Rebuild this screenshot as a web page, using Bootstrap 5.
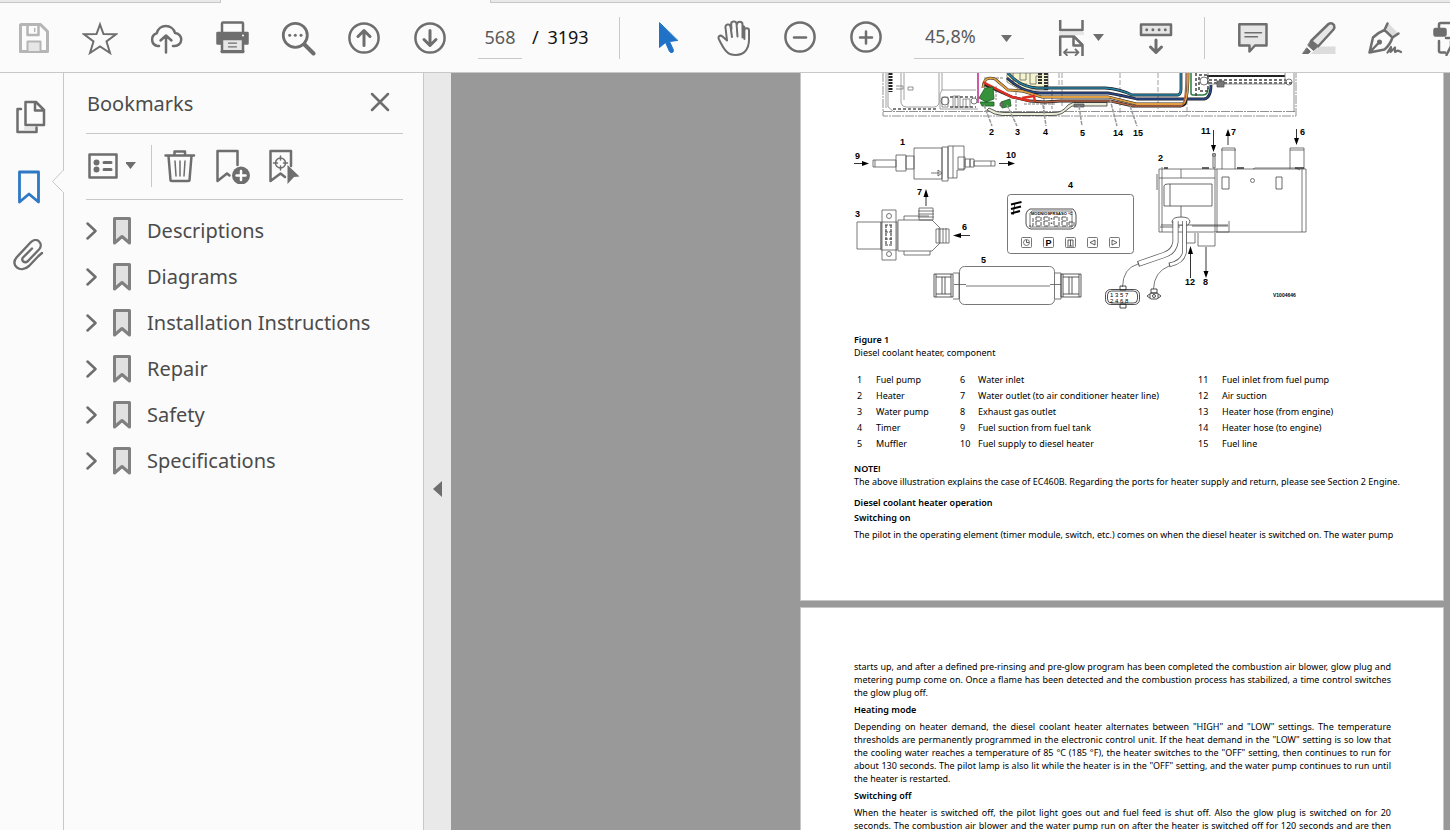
<!DOCTYPE html>
<html lang="en">
<head>
<meta charset="utf-8">
<meta name="viewport" content="width=device-width, initial-scale=1">
<title>Document viewer</title>
<link rel="stylesheet" href="https://cdn.jsdelivr.net/npm/bootstrap@5.3.0/dist/css/bootstrap.min.css">
<script src="https://cdn.jsdelivr.net/npm/bootstrap@5.3.0/dist/js/bootstrap.bundle.min.js"></script>
<style>
:root{--line:#c8c8c8;--ink:#6e6e6e;--paper:#fbfbfb}
body{font-family:"Noto Sans","Open Sans",sans-serif;background:var(--paper);color:#4b4b4b;line-height:1.2}
svg{display:block;flex:none}
.ico{width:36px;height:36px;fill:none;stroke:var(--ink);stroke-width:2.5;stroke-linejoin:round;stroke-linecap:round}
.ico-muted{stroke:#b5b5b5}
.ico-active{stroke:#2f78c4}
.ico-flat{stroke-linecap:butt}
.tabstrip{height:3px}
.tab-rest{background:#e9e9e9;border-bottom:1px solid var(--line)}
.tab-first{width:221px;border-right:1px solid var(--line)}
.tab-open{width:269px}
.tab-last{border-left:1px solid var(--line)}
.toolbar{height:70px;border-bottom:1px solid var(--line);padding-left:1px}
.toolbar>*{flex:none}
.tool{width:66px;height:66px;padding:0;border:0;background:none;display:flex;align-items:center;justify-content:center}
.tool-fit{width:55px;gap:4px;justify-content:flex-start;margin-left:29px}
.step{margin-left:15px}
.vline{width:1px;height:42px;background:var(--line);flex:none}
.field{border:0;border-bottom:1px solid var(--line);background:none;height:42px;color:#5a5a5a;font-size:18px;padding:0}
.pagebox{width:44px;text-align:center}
.total{font-size:18px;color:#111;padding-left:10px;width:97px;white-space:nowrap}
.zoombox{width:110px;position:relative}
.zoombox select{width:100%;appearance:none;padding-left:11px}
.zoombox svg{position:absolute;right:12px;top:18px;pointer-events:none}
.caret{width:11px;height:7px;fill:var(--ink)}
.rail{width:64px;border-right:1px solid var(--line);padding-top:26px;gap:34px}
.rail button{border:0;background:none;padding:0;height:36px;width:58px;display:flex;justify-content:center;position:relative}
.rail .notch{position:absolute;left:52px;top:0;height:24px;width:12px}
.panel{width:360px;border-right:1px solid var(--line);padding:0 20px 0 22px}
.panel h1{font-size:20px;font-weight:400;padding:2px 0 0 1px}
.panel-head{height:61px;border-bottom:1px solid var(--line)}
.panel-tools{height:66px;border-bottom:1px solid var(--line);padding-bottom:2px}
.panel-tools button,.panel-head button{border:0;background:none;padding:0}
.panel-tools .vline{margin:0 10px 0 14px}
.close-x{width:22px;height:22px}
.marks{padding-top:8px}
.marks a{height:46px;font-size:20px;color:#4b4b4b}
.marks .chev{width:12px;height:18px}
.marks .flag{width:20px;height:30px;margin:0 15px 0 14px}
.splitter{width:27px;background:#e9e9e9;border:0;padding:74px 0 0 8px}
.desk{background:#999;padding-right:6px;min-width:0}
.sheet{width:644px;background:#fff;border:1px solid #c6c6c6;padding:0 52px 0 53px;margin-left:auto;color:#000;font-size:9px;line-height:13px;flex:none}
.sheet-a{border-top:0;height:528px;margin-bottom:6px}
.sheet-b{padding-top:52px}
.sheet h2{font-size:9px;line-height:13px;font-weight:600;margin:0}
.sheet p{margin:0;text-align:justify}
.sheet h2.sub{margin-top:2px}
.runs-on{text-align-last:justify}
.legend{margin:13px 0 10px;width:100%;table-layout:fixed}
.legend td{padding:0;height:16px;line-height:16px;white-space:nowrap}
.legend td:first-child{padding-left:3px}
.legend .num{width:22px}.legend .part{width:84px}.legend .num2{width:18px}.legend .part2{width:220px}.legend .num3{width:24px}
.plate{width:100%;height:260px}
.plate text{font-family:"Liberation Sans",sans-serif;font-weight:700;font-size:9px;fill:#000;stroke:none}
.plate .tiny{font-size:5px}
.plate .lcd{font-size:4px}
.plate .pins{font-size:6px;font-weight:400}
</style>
</head>
<body class="vh-100 d-flex flex-column overflow-hidden">
<div class="tabstrip d-flex flex-shrink-0">
  <div class="tab-rest tab-first"></div><div class="tab-open"></div><div class="tab-rest tab-last flex-grow-1"></div>
</div>
<header class="toolbar d-flex align-items-center flex-nowrap flex-shrink-0 overflow-hidden">
  <button class="tool" aria-label="Save"><svg class="ico ico-muted" viewBox="0 0 36 36"><path d="M5 4.500H24.500L31.500 11.500V31.500H4.500V5Z" stroke-width="3"/><path d="M11.500 4.500V15H22.500V4.500"/><path d="M18.700 8.500V11.500" stroke-width="1.500"/><path d="M11.500 31V21.500H24.500V31" fill="#e6e6e6" stroke-width="2"/></svg></button>
  <button class="tool" aria-label="Star"><svg class="ico" viewBox="0 0 36 36"><path stroke-width="2" stroke-linejoin="miter" d="M18 4.500L21.500 14 34 14.300 24.500 21.500 28 33 18 26.500 8 33 11.500 21.500 2 14.300 14.500 14Z"/></svg></button>
  <button class="tool" aria-label="Upload"><svg class="ico" viewBox="0 0 36 36"><path d="M11 26H9.500A6.600 6.600 0 0 1 8.800 13.200 9.400 9.400 0 0 1 27 13 6.500 6.500 0 0 1 26.500 26H25M18 16V32.500M12.500 20.500L18 15.500 23.500 20.500"/></svg></button>
  <button class="tool" aria-label="Print"><svg class="ico" viewBox="0 0 36 36"><path d="M8 12V3.500Q8 2.500 9 2.500H28Q29 2.500 29 3.500V12" fill="#fbfbfb"/><path d="M3.500 13H33.500V23.500H3.500Z" fill="#6e6e6e"/><path d="M8 19H29V32H8Z" fill="#e6e6e6"/><path d="M14.500 23.200H22.500M14.500 26.800H22.500" stroke-width="1.300"/><path d="M8 31.500H29" stroke-width="3"/><circle cx="29" cy="15.500" r="1" fill="#fff" stroke="none"/></svg></button>
  <button class="tool" aria-label="Find"><svg class="ico" viewBox="0 0 36 36"><circle cx="15.300" cy="15.300" r="12" stroke-width="2.800"/><path d="M24.500 24.500L33.500 33.500" stroke-width="4"/><g fill="#6e6e6e" stroke="none"><circle cx="9.700" cy="15.300" r="1.500"/><circle cx="15.300" cy="15.300" r="1.500"/><circle cx="21" cy="15.300" r="1.500"/></g></svg></button>
  <button class="tool" aria-label="Previous page"><svg class="ico" viewBox="0 0 36 36"><circle cx="18" cy="18" r="14.600"/><path stroke-width="3" d="M18 25.500V11M12 16.500L18 10.500 24 16.500"/></svg></button>
  <button class="tool" aria-label="Next page"><svg class="ico" viewBox="0 0 36 36"><circle cx="18" cy="18" r="14.600"/><path stroke-width="3" d="M18 10.500V25M12 19.500L18 25.500 24 19.500"/></svg></button>
  <input class="field pagebox step" value="568" aria-label="Page number">
  <div class="total"><span class="me-1">/</span> 3193</div>
  <div class="vline"></div>
  <button class="tool step" aria-label="Select"><svg class="ico" viewBox="0 0 36 36"><path fill="#2072c7" stroke="#2072c7" stroke-width="1" d="M9.500 3V27.500L15.500 22.500 19.500 31.500Q21 33.500 23 32 24 31 23 29L19.500 21.500 27.500 20.500Z"/></svg></button>
  <button class="tool" aria-label="Pan"><svg class="ico" viewBox="0 0 36 36"><path stroke-width="2" d="M11 20.500L6.500 16.500C4 14.500 1.500 16.500 3 19.500 6 25 7.500 29 11 32 15 36 25 36 29 31.500 32 28 33 25 33 20V10.500A2.300 2.300 0 0 0 28.400 10.500M11 20.500L9.500 7.500A2.500 2.500 0 0 1 14.500 6.500L16 17M15.500 9L15.200 4.500A2.700 2.700 0 0 1 20.500 3.500L21.500 16.500M21 4.500A2.500 2.500 0 0 1 26.500 4.500V17.500M26.500 6A1.800 1.800 0 0 1 28.400 8V19"/></svg></button>
  <button class="tool" aria-label="Zoom out"><svg class="ico" viewBox="0 0 36 36"><circle cx="18" cy="17" r="14.600"/><path d="M12 17.500H24"/></svg></button>
  <button class="tool" aria-label="Zoom in"><svg class="ico" viewBox="0 0 36 36"><circle cx="18" cy="17" r="14.600"/><path d="M12 17.500H24M18 11.500V23.500"/></svg></button>
  <div class="zoombox step"><select class="field" aria-label="Zoom"><option>45,8%</option></select><svg class="caret" viewBox="0 0 11 7"><path d="M0 0H11L5.500 7Z"/></svg></div>
  <button class="tool tool-fit" aria-label="Fit width"><svg class="ico ico-flat" viewBox="0 0 36 36"><path d="M6 12H31V15H6Z" fill="#e6e6e6" stroke="none"/><path d="M7.200 0V10H29.500V0M7.200 36V16.500H21L29.500 25V36M20.500 17V25.500H29"/><path stroke-width="1.800" d="M11 32.300H25.500M14.500 28.800L11 32.300 14.500 35.800M22 28.800L25.500 32.300 22 35.800"/></svg><svg class="caret" viewBox="0 0 11 7"><path d="M0 0H11L5.500 7Z"/></svg></button>
  <button class="tool step" aria-label="Scrolling mode"><svg class="ico" viewBox="0 0 36 36"><path fill="#e6e6e6" d="M3 4.500H33V15H3Z"/><path stroke-width="3" stroke-dasharray="0 6.200" d="M8.700 9.700H28"/><path stroke-width="3" d="M18 20V32M12.500 27L18 32.500 23.500 27"/></svg></button>
  <div class="vline step"></div>
  <button class="tool step" aria-label="Comment"><svg class="ico" viewBox="0 0 36 36"><path fill="#e6e6e6" d="M4.300 4.300H31.500V25.500H20L14.500 31.500V25.500H4.300Z"/><path stroke-width="1.500" d="M10 12.700H26.500M10 16.700H22.500"/></svg></button>
  <button class="tool" aria-label="Highlight"><svg class="ico" viewBox="0 0 36 36"><path fill="#dcdcdc" stroke="none" d="M9 34H34.500V26.500H19Z"/><path fill="#e6e6e6" d="M10 21L27.500 4Q30.500 2 33 5 34 7.500 32.500 9.500L17 26.500Z"/><path fill="#6e6e6e" stroke-width="1" d="M9.500 21.500L16 27.500 12.500 30.500 7 25.500ZM6 28L9.500 31.500 7.500 33.500H2Z"/></svg></button>
  <button class="tool" aria-label="Sign"><svg class="ico" viewBox="0 0 36 36"><path fill="#dcdcdc" stroke="none" d="M21 3L31 13 26 16 18 8Z"/><path d="M2.500 32.500L6 17.500Q11 12.500 17.500 10L25.500 17.500Q23 25 17.500 29.500ZM2.500 32.500L12 22.500M17.500 10L20.500 3.500M25.500 17.500L31.500 13.500"/><circle cx="12.500" cy="22" r="1.300"/><path stroke-width="2.200" d="M20.500 32.500L24 27 23.500 32 28 27.500 28 32 31 30.500 34 32"/></svg></button>
  <button class="tool justify-content-start step" aria-label="More tools"><svg class="ico" viewBox="0 0 36 36"><rect x="1.500" y="9" width="11" height="6.500" rx="1" fill="#6e6e6e"/><path d="M6 9V4.500Q6 3 8 3H24V18H13M6 21V31Q6 32.500 8 32.500H12M18 21V26L13.500 35"/></svg></button>
</header>
<main class="d-flex flex-grow-1 overflow-hidden">
  <nav class="rail d-flex flex-column flex-shrink-0" aria-label="Panels">
    <button aria-label="Page thumbnails"><svg class="ico" viewBox="0 0 36 36"><path d="M10 10H6.500V33H25.500V28.500"/><path fill="#e6e6e6" stroke="none" d="M13 28H24V31H13Z"/><path d="M14.500 3H25L33 11V26H14.500ZM24 3.500V11.500H32"/></svg></button>
    <button aria-label="Bookmarks"><svg class="ico ico-active" viewBox="0 0 36 36"><path stroke-width="2.800" d="M8.500 3H27.500V33L18 25 8.500 33Z"/></svg><svg class="notch" viewBox="0 0 12 24"><path d="M11.500 1L.5 12.500 11.500 23.500" fill="#fbfbfb" stroke="#c8c8c8"/><path d="M11.500 2V23" stroke="#fbfbfb" stroke-width="1.500"/></svg></button>
    <button aria-label="Attachments"><svg class="ico" viewBox="1 3 36 36"><path stroke-width="2.400" d="M28.500 20L19 30C10 38 0 29 6.500 21.500L20.500 6.500C27 0 34 8 29 13.500L18 25C14.500 28 10.500 24.500 13 21.500L22 12.500M32 17L28.500 20"/></svg></button>
  </nav>
  <aside class="panel flex-shrink-0">
    <div class="panel-head d-flex align-items-center justify-content-between">
      <h1 class="m-0">Bookmarks</h1>
      <button aria-label="Close" class="me-2 pe-1"><svg class="ico close-x" viewBox="0 0 22 22"><path d="M3 2L19 18M19 2L3 18"/></svg></button>
    </div>
    <div class="panel-tools d-flex align-items-center">
      <button class="d-flex align-items-center gap-1" aria-label="Options"><svg class="ico" viewBox="0 0 36 36"><path d="M3.500 6.500H30.500V29.500H3.500Z"/><g stroke-width="3"><path d="M18 14.500H25M18 21.500H25"/><circle cx="10.500" cy="14.500" r="1.500"/><circle cx="10.500" cy="21.500" r="1.500"/></g></svg><svg class="caret" viewBox="1 0 11 7"><path d="M0 0H11L5.500 7Z"/></svg></button>
      <div class="vline"></div>
      <button aria-label="Delete"><svg class="ico" viewBox="0 0 36 36"><path d="M3.500 7.500H32M12.500 7V3.500H23V7M6.500 8L8.500 32Q8.500 33 10 33H26Q27.500 33 27.500 32L29.500 8"/><path stroke-width="1.500" d="M13 13L14 28M18 13V28M23 13L22 28"/></svg></button>
      <button class="ms-3" aria-label="New bookmark"><svg class="ico" viewBox="0 0 36 36"><path d="M13 25.500L3.500 33V3H23.500V17M13 25.500L15.500 27.500"/><circle cx="27" cy="27.500" r="9" fill="#6e6e6e" stroke="none"/><path stroke="#fff" d="M22.500 27.500H31.500M27 23V32"/></svg></button>
      <button class="ms-3" aria-label="Find current bookmark"><svg class="ico" viewBox="0 0 36 36"><path d="M25 18V3H4.500V33L14.500 25.500 19 29"/><circle cx="14.500" cy="15" r="5" stroke-width="1.500"/><path stroke-width="1.500" d="M14.500 8V12M14.500 18V22M7.500 15H11.500M17.500 15H21.500"/><path fill="#6e6e6e" stroke="none" d="M21.500 17L33.500 28.500 28 29 21.500 36Z"/></svg></button>
    </div>
    <div class="marks" id="marks"></div>
  </aside>
  <button class="splitter flex-shrink-0" aria-label="Collapse panel"><svg width="11" height="16" viewBox="0 0 11 16"><path fill="#6e6e6e" d="M10 0V16L1 8Z"/></svg></button>
  <section class="desk flex-grow-1 d-flex flex-column overflow-hidden">
    <article class="sheet sheet-a">
      <svg class="plate" viewBox="854 73 537 260" fill="none" stroke="#555" stroke-width=".8" role="img" aria-label="Diesel coolant heater components">
        <!-- machine outline, cut by the top edge -->
        <g>
          <path stroke="#777" stroke-dasharray="9 1 2 1" d="M883 73V116H1296V73M883 111.500H1296"/>
          <path stroke="#888" d="M886 73V108M888 73V107L893 111M901 73V103Q902 107 906 107H930Q938 108 939 103V73M904 73V100M942 73V90L940 94V109H978M942 90H976"/>
          <path stroke="#222" stroke-width="4" stroke-dasharray="2 1" d="M890.500 73V92"/>
          <path stroke="#777" d="M896 86H903V89H896M908 87H913V90H908ZM942 97H948V107H942ZM953 96H960V107H953ZM963 99H970V107H963ZM955 97V106M958 97V106M966 99V106"/>
          <circle cx="945" cy="101" r="4"/><circle cx="974" cy="101" r="3"/>
          <path stroke-width="1.500" stroke-dasharray="3 2" d="M950 97H976M950 107H976M893 109H938"/>
          <path fill="#f6f4ce" stroke="#777" d="M1007 73H1048V90H1020L1007 82Z"/>
          <path stroke="#666" d="M1013 73V85M1020 73V80H1026V73M1030 73V84H1036V76H1042M1010 81H1016M1018 84H1027M1036 88H1046"/>
          <path stroke="#333" stroke-width="4" stroke-dasharray="2 1" d="M1046 73V90M1040 73V84"/>
          <path stroke="#888" stroke-dasharray="5 2" d="M1059 73V88M1062 73V108M1120 73V116M1158 73V109M1187 100V116"/>
          <path stroke="#666" stroke-dasharray="3 1" d="M984 78H1004M996 86V100M1024 104H1056M1052 90V110M1044 98V112M1016 92V110"/>
          <path stroke="#d157a9" stroke-width="2" d="M978 73V103"/>
          <path fill="#edeedb" stroke="#333" d="M989 108Q997 113 1004 112.500H1054Q1062 113 1068 105L1073 102.500H1107V106H1072L1062 113.500Q1057 116 1050 115.500H1002Q994 115 987 110Z"/>
          <g stroke="#222" stroke-width="2.800"><path d="M1008 73Q1020 87 1037 88H1105Q1120 89 1132 95H1178Q1181 94 1181 89V73"/><path d="M1007 78Q1022 92 1040 93H1108Q1120 95 1137 99H1204Q1211 98 1211 85"/><path d="M983 88Q984 75 995 79L1008 90 1022 91 1042 97H1108L1137 104H1183Q1188 102 1188 73"/><path d="M983 84L1012 97 1030 101 1045 102 1060 101H1110L1133 106H1181Q1186 105 1186 100"/></g>
          <path stroke="#2685a8" stroke-width="1.600" d="M1008 73Q1020 87 1037 88H1105Q1120 89 1132 95H1178Q1181 94 1181 89V73"/>
          <path stroke="#29478f" stroke-width="1.400" d="M1007 78Q1022 92 1040 93H1108Q1120 95 1137 99H1204Q1211 98 1211 85"/>
          <path stroke="#e2a041" stroke-width="1.800" d="M983 88Q984 75 995 79L1008 90 1022 91 1042 97H1108L1137 104H1183Q1188 102 1188 73"/>
          <path stroke="#b76445" stroke-width="1.400" d="M1030 101L1045 102 1060 101H1110L1133 106H1181Q1186 105 1186 73"/>
          <path stroke="#dd3024" stroke-width="2.400" d="M983 82L1012 97 1030 101M1022 98L1034 96 1035 102"/>
          <path fill="#36913a" stroke="#185c20" d="M985 88L993 87 994 99 986 102 979 98ZM1001 102L1010 99 1011 106 1002 108ZM980 102H994V106H982Z"/>
          <path stroke="#287940" stroke-width="1.500" d="M1191 73V93Q1191 95 1193 95H1203Q1208 95 1208 88"/>
          <path stroke-dasharray="3 2" stroke="#444" stroke-width="1.500" d="M1196 73V96M1199 75H1208V91H1199ZM1209 83H1293M1209 80H1286"/>
          <path stroke="#222" stroke-width="2" d="M1207 76H1285"/><path stroke="#777" d="M1208 73V84H1285V73M1294 73V112"/>
          <circle cx="1204" cy="81" r="4"/><circle cx="1289" cy="82" r="3"/><path fill="#777" d="M1217 81H1224V87H1217ZM1074 104H1084V107H1074ZM1000 103H1003V106H1000Z"/>
          <path stroke="#999" stroke-dasharray="4 1" stroke-width="1.500" d="M984 105L992 126M1007 105L1017 126M1043 105L1046 126M1079 106L1082 126M1110 99L1117 126M1130 106L1137 126"/>
        </g>
        <!-- 1: fuel pump -->
        <path fill="#fff" d="M873 160H896V167H873ZM875 160V167M896 155H906V171H896ZM906 156H914V169H906ZM914 148H942V179H914ZM942 147H948V181H942ZM948 146H964V170H957V178H948ZM953 146V178M958 157H965V169H958ZM965 159H970V167H965ZM970 159H974V167H970ZM974 161H995V166H974ZM991 161V166M931 173H940M938 170V176L942 173Z"/>
        <!-- 3: water pump -->
        <path fill="#fff" d="M857 222H881V249H857ZM882 210H896V260H882ZM898 220H932L940 228V243L932 251H898ZM904 220V216H929M904 251V255H930V251M881 222H897V250H881ZM919 208H933V220H919ZM918 211H934M918 214H934M918 217H934M936 229H949V243H936ZM939 228V243M943 228V243M946 228V243"/>
        <circle cx="889" cy="216" r="2.500"/><circle cx="889" cy="254" r="2.500"/><path stroke="#444" stroke-width="1.200" stroke-dasharray="3 1" d="M886 225V245M891 225V245M885 225H893M885 232H893M885 239H893M885 245H893"/>
        <!-- 4: timer -->
        <rect x="1007.500" y="194.500" width="126" height="59" rx="3"/><path stroke="#000" stroke-width="2" d="M1011 204.500L1021.500 202M1011 209L1021 206.500M1011 213.500L1020 211"/><path stroke="#000" d="M1015 203L1013 215"/>
        <path stroke="#222" d="M1030 209H1073Q1076 212 1076 215V223Q1076 228 1071 229H1031Q1026 228 1026 223V214Q1027 210 1030 209Z"/><path d="M1032 211H1072V227H1030V213Z"/>
        <path stroke-width="1" stroke-dasharray="4 1" d="M1033 218V226H1029M1036 217H1041V226H1036ZM1036 221H1041M1044 217H1049V226H1044ZM1044 221H1049M1054 217H1059V226H1054ZM1062 217H1067V226H1062ZM1062 221H1067M1069 222H1074V226H1069Z"/><path stroke-width="1.500" stroke-dasharray="1.500 3" d="M1051.500 218V225"/>
        <g><rect x="1021.500" y="237.500" width="10" height="10" rx="1"/><rect x="1043.500" y="237.500" width="10" height="10" rx="1"/><rect x="1065.500" y="237.500" width="10" height="10" rx="1"/><rect x="1087.500" y="237.500" width="10" height="10" rx="1"/><rect x="1109.500" y="237.500" width="10" height="10" rx="1"/></g>
        <circle cx="1026.500" cy="242.500" r="3"/><path stroke="#333" d="M1026.500 240V242.500H1029M1068 240H1073V245M1068 240V245M1070.500 240V246M1067 246H1074M1095 240V245L1090 242.500ZM1112 240V245L1117 242.500Z"/>
        <!-- 5: muffler -->
        <rect x="959.500" y="266.500" width="95" height="38" rx="5" fill="#fff"/><path d="M953 273H959V299H953M1055 273H1061V299H1055M954 284.500H966M966 286H1050M1050 284.500H1061"/>
        <g stroke="#333"><path d="M934 274H953V297H934ZM1061 274H1081V297H1061ZM936 277H951M936 294H951M1063 277H1079M1063 294H1079"/><path d="M936 274V297M942 277V294M945 277V294M951 274V297M1063 274V297M1069 277V294M1072 277V294M1079 274V297"/></g>
        <!-- 2: heater -->
        <path fill="#fff" d="M1159 169H1306V232H1159ZM1162 167V232M1215 169V232M1217 169V232M1302 169V232M1222 169V148H1235V169M1221 150H1236M1290 169V148H1304V169M1290 150H1304M1159 178H1215M1181 169V178M1253 169L1255 168H1296L1300 170M1229 221V232H1216"/>
        <path stroke="#444" d="M1164 186Q1164 184 1168 184H1212V206H1164ZM1170 184V206M1181 206V218M1161 225H1228M1160 227H1180M1192 226H1228M1222 177H1229V189H1222ZM1276 177H1282V189H1276ZM1157 174V190M1213 153V168H1215V153"/><circle cx="1252.500" cy="180.500" r="2"/><circle cx="1214" cy="155" r="1.500"/>
        <path stroke="#333" stroke-width="1.500" d="M1164 168H1168M1202 168H1209M1237 168H1244M1295 168H1304"/>
        <path d="M1186 233V243H1195V233M1198 233V246H1215V233"/>
        <path stroke="#444" fill="#fff" d="M1172 222Q1172 217 1181 217 1190 217 1190 222L1188 225H1174Z"/>
        <path stroke="#555" stroke-width="6" d="M1175.500 221V242Q1174 252 1164 255L1138 264"/><path stroke="#fff" stroke-width="4.500" d="M1175.500 220V242Q1174 252 1164 255L1139 263.600"/><path stroke="#555" stroke-width="4.500" d="M1184.500 221V252Q1183 262 1169 265"/><path stroke="#fff" stroke-width="3" d="M1184.500 220V252Q1183 262 1170 264.800"/>
        <path d="M1138 264Q1123 268 1122.500 287M1169 266Q1154 272 1153.500 289"/>
        <g stroke="#222"><rect x="1105.500" y="289.500" width="34" height="15" rx="5"/><rect x="1107.500" y="291" width="30" height="12" rx="4"/><path d="M1120 286H1126V290H1120ZM1120 304H1126V308H1120ZM1151 289H1157V293H1151ZM1147 296L1151 293H1157L1161 296 1157 299H1151Z"/><circle cx="1154" cy="296" r="1.500"/><path d="M1150 294V298M1158 294V298"/></g>
        <!-- flow arrows -->
        <g stroke="#000"><path d="M854 163.500H863M999 163.500H1010M926 206V195M970 235.500H958M1213.500 130V147M1228 145V133M1296.500 129V140M1190.500 278V252M1206 247V272"/><path fill="#000" stroke="none" d="M862 161L869 163.500 862 166ZM1008 161L1015 163.500 1008 166ZM923.500 197L926 189 928.500 197ZM961 233L953 235.500 961 238ZM1211 145L1213.500 152 1216 145ZM1225.500 136L1228 129 1230.500 136ZM1294 138L1296.500 145 1299 138ZM1188 254L1190.500 246 1193 254ZM1203.500 271L1206 278 1208.500 271Z"/></g>
        <g><text x="989" y="135">2</text><text x="1015" y="135">3</text><text x="1043" y="135">4</text><text x="1080" y="136">5</text><text x="1113" y="136">14</text><text x="1133" y="136">15</text><text x="900" y="145">1</text><text x="855" y="159">9</text><text x="1006" y="158">10</text><text x="917" y="195">7</text><text x="855" y="217">3</text><text x="962" y="230">6</text><text x="1068" y="188">4</text><text x="981" y="263">5</text><text x="1158" y="161">2</text><text x="1201" y="134">11</text><text x="1231" y="135">7</text><text x="1300" y="135">6</text><text x="1185" y="285">12</text><text x="1203" y="285">8</text><text x="1045.500" y="246">P</text><text class="tiny" x="1273" y="297">V1004646</text><text class="lcd" x="1031" y="215">MODNIOSFRSASO °C</text><text class="pins" x="1110" y="297">1 3 5 7</text><text class="pins" x="1110" y="303">2 4 6 8</text></g>
      </svg>
      <h2>Figure 1</h2>
      <p>Diesel coolant heater, component</p>
      <table class="legend">
        <colgroup><col class="num"><col class="part"><col class="num2"><col class="part2"><col class="num3"><col></colgroup>
        <tbody>
        <tr><td>1</td><td>Fuel pump</td><td>6</td><td>Water inlet</td><td>11</td><td>Fuel inlet from fuel pump</td></tr>
        <tr><td>2</td><td>Heater</td><td>7</td><td>Water outlet (to air conditioner heater line)</td><td>12</td><td>Air suction</td></tr>
        <tr><td>3</td><td>Water pump</td><td>8</td><td>Exhaust gas outlet</td><td>13</td><td>Heater hose (from engine)</td></tr>
        <tr><td>4</td><td>Timer</td><td>9</td><td>Fuel suction from fuel tank</td><td>14</td><td>Heater hose (to engine)</td></tr>
        <tr><td>5</td><td>Muffler</td><td>10</td><td>Fuel supply to diesel heater</td><td>15</td><td>Fuel line</td></tr>
        </tbody>
      </table>
      <h2>NOTE!</h2>
      <p class="text-nowrap">The above illustration explains the case of EC460B. Regarding the ports for heater supply and return, please see Section 2 Engine.</p>
      <h2 class="mt-2">Diesel coolant heater operation</h2>
      <h2 class="sub">Switching on</h2>
      <p class="text-nowrap pt-1">The pilot in the operating element (timer module, switch, etc.) comes on when the diesel heater is switched on. The water pump</p>
    </article>
    <article class="sheet sheet-b flex-grow-1">
      <p>starts up, and after a defined pre-rinsing and pre-glow program has been completed the combustion air blower, glow plug and metering pump come on. Once a flame has been detected and the combustion process has stabilized, a time control switches the glow plug off.</p>
      <h2 class="py-1">Heating mode</h2>
      <p>Depending on heater demand, the diesel coolant heater alternates between "HIGH" and "LOW" settings. The temperature thresholds are permanently programmed in the electronic control unit. If the heat demand in the "LOW" setting is so low that the cooling water reaches a temperature of 85 °C (185 °F), the heater switches to the "OFF" setting, then continues to run for about 130 seconds. The pilot lamp is also lit while the heater is in the "OFF" setting, and the water pump continues to run until the heater is restarted.</p>
      <h2 class="py-1">Switching off</h2>
      <p class="runs-on">When the heater is switched off, the pilot light goes out and fuel feed is shut off. Also the glow plug is switched on for 20 seconds. The combustion air blower and the water pump run on after the heater is switched off for 120 seconds and are then</p>
    </article>
  </section>
</main>
<script>
document.getElementById('marks').innerHTML = ['Descriptions','Diagrams','Installation Instructions','Repair','Safety','Specifications'].map(name =>
  `<a href="#" class="d-flex align-items-center text-decoration-none"><svg class="ico chev" viewBox="0 0 12 18"><path d="M1.500 1.500L9.500 9 1.500 16.500"/></svg><svg class="ico flag" viewBox="0 0 20 30"><path stroke="#808080" fill="#e1e1e1" stroke-width="3" d="M2.500 2.500H17.500V27L10 20.500 2.500 27Z"/></svg>${name}</a>`).join('');
</script>
</body>
</html>
